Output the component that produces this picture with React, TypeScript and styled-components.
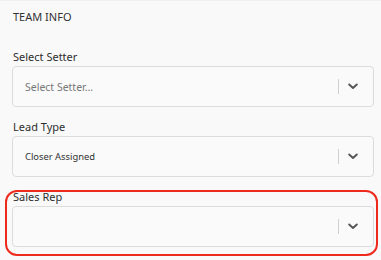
import React from "react";
import styled, { createGlobalStyle } from "styled-components";

const Global = createGlobalStyle`
  html, body { margin: 0; padding: 0; background: #f9f9f9; }
  body { font-family: "Noto Sans", "Open Sans", sans-serif; color: #333; }
`;

const Panel = styled.div`
  width: 381px;
  height: 260px;
  box-sizing: border-box;
  padding: 9px 7px 0 12px;
  background: #f9f9f9;
  border-top: 1px solid #f0f0f0;
  display: flex;
  flex-direction: column;
  overflow: hidden;
`;

const Heading = styled.div`
  font-size: 11px;
  line-height: 15px;
  color: #333;
  margin-top: -1px;
  margin-bottom: 25px;
  padding-left: 1px;
`;

const Fields = styled.div`
  display: flex;
  flex-direction: column;
  gap: 12px;
`;

const Field = styled.div<{ $highlight?: boolean }>`
  position: relative;
  display: flex;
  flex-direction: column;
  gap: 1px;
  ${(p) =>
    p.$highlight &&
    `
    &::after {
      content: "";
      position: absolute;
      left: -7px;
      right: -4px;
      top: 1px;
      height: 66px;
      border: 2px solid #ee2a1c;
      border-radius: 12px;
      box-sizing: border-box;
      pointer-events: none;
    }
  `}
`;

const Label = styled.div`
  font-size: 11px;
  line-height: 16px;
  color: #2e2e2e;
  padding-left: 1px;
`;

const SelectBox = styled.div`
  height: 41px;
  box-sizing: border-box;
  border: 1px solid #dcdcdc;
  border-radius: 4px;
  background: #fafafa;
  display: flex;
  align-items: center;
  padding-left: 12px;
`;

const Value = styled.div<{ $placeholder?: boolean }>`
  flex: 1;
  font-size: ${(p) => (p.$placeholder ? "10.5px" : "9.4px")};
  color: ${(p) => (p.$placeholder ? "#777" : "#333")};
`;

const Separator = styled.span`
  width: 1px;
  height: 15px;
  background: #d0d0d0;
  margin-right: 9px;
`;

const Indicator = styled.span`
  width: 10px;
  height: 10px;
  display: flex;
  align-items: center;
  justify-content: center;
  margin-right: 15px;
`;

const Chevron = () => (
  <svg width="10" height="7" viewBox="0 0 10 7">
    <polyline
      points="1.2,1.5 5,5 8.8,1.5"
      fill="none"
      stroke="#555"
      strokeWidth="1.9"
      strokeLinecap="round"
      strokeLinejoin="round"
    />
  </svg>
);

const Select = ({ value, placeholder }: { value?: string; placeholder?: string }) => (
  <SelectBox>
    <Value $placeholder={!value}>{value || placeholder || ""}</Value>
    <Separator />
    <Indicator>
      <Chevron />
    </Indicator>
  </SelectBox>
);

export default function App() {
  return (
    <>
      <Global />
      <Panel>
        <Heading>TEAM INFO</Heading>
        <Fields>
          <Field>
            <Label>Select Setter</Label>
            <Select placeholder="Select Setter..." />
          </Field>
          <Field>
            <Label>Lead Type</Label>
            <Select value="Closer Assigned" />
          </Field>
          <Field $highlight>
            <Label>Sales Rep</Label>
            <Select />
          </Field>
        </Fields>
      </Panel>
    </>
  );
}
